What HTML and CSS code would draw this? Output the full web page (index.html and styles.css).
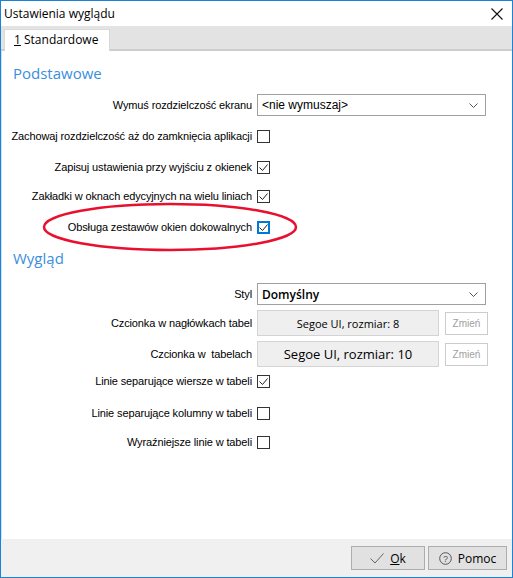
FILE: index.html
```html
<html>
    <head>
        <meta charset="utf-8">
        <link rel="stylesheet" href="styles.css">
    </head>
    <body>
        <div class="window">
            <div class="titlebar">
                <span class="title">Ustawienia wyglądu</span>
                <svg class="close" width="12" height="12" viewBox="0 0 12 12"><path d="M0.5 0.5 L11.5 11.5 M11.5 0.5 L0.5 11.5" stroke="#111" stroke-width="1.1" fill="none"/></svg>
            </div>
            <div class="tabstrip">
                <div class="tab"><u>1</u> Standardowe</div>
            </div>
            <div class="content">
                <h2 class="section">Podstawowe</h2>
                <div class="row first">
                    <span class="lbl">Wymuś rozdzielczość ekranu</span>
                    <div class="select"><span>&lt;nie wymuszaj&gt;</span><svg width="9" height="5" viewBox="0 0 9 5"><path d="M0.5 0.5 L4.5 4.5 L8.5 0.5" stroke="#555" fill="none"/></svg></div>
                </div>
                <div class="row">
                    <span class="lbl">Zachowaj rozdzielczość aż do zamknięcia aplikacji</span>
                    <span class="check"></span>
                </div>
                <div class="row">
                    <span class="lbl">Zapisuj ustawienia przy wyjściu z okienek</span>
                    <span class="check on"><svg width="11" height="11" viewBox="0 0 11 11"><path d="M1.5 5.5 L4.5 8.5 L9.5 2.5" stroke="#222" fill="none"/></svg></span>
                </div>
                <div class="row near">
                    <span class="lbl">Zakładki w oknach edycyjnych na wielu liniach</span>
                    <span class="check on"><svg width="11" height="11" viewBox="0 0 11 11"><path d="M1.5 5.5 L4.5 8.5 L9.5 2.5" stroke="#222" fill="none"/></svg></span>
                </div>
                <div class="row">
                    <span class="lbl">Obsługa zestawów okien dokowalnych</span>
                    <span class="check on focus"><svg width="9" height="9" viewBox="0 0 9 9"><path d="M0.5 4.5 L3.5 7.5 L8.5 1.5" stroke="#222" fill="none"/></svg></span>
                </div>

                <h2 class="section second">Wygląd</h2>
                <div class="row styl">
                    <span class="lbl">Styl</span>
                    <div class="select"><span class="big">Domyślny</span><svg width="9" height="5" viewBox="0 0 9 5"><path d="M0.5 0.5 L4.5 4.5 L8.5 0.5" stroke="#555" fill="none"/></svg></div>
                </div>
                <div class="row tall">
                    <span class="lbl">Czcionka w nagłówkach tabel</span>
                    <div class="fontbtn">Segoe UI, rozmiar: 8</div>
                    <div class="change">Zmień</div>
                </div>
                <div class="row tall">
                    <span class="lbl">Czcionka w &nbsp;tabelach</span>
                    <div class="fontbtn large">Segoe UI, rozmiar: 10</div>
                    <div class="change">Zmień</div>
                </div>
                <div class="row close-up">
                    <span class="lbl">Linie separujące wiersze w tabeli</span>
                    <span class="check on"><svg width="11" height="11" viewBox="0 0 11 11"><path d="M1.5 5.5 L4.5 8.5 L9.5 2.5" stroke="#222" fill="none"/></svg></span>
                </div>
                <div class="row wide">
                    <span class="lbl">Linie separujące kolumny w tabeli</span>
                    <span class="check"></span>
                </div>
                <div class="row near">
                    <span class="lbl">Wyraźniejsze linie w tabeli</span>
                    <span class="check"></span>
                </div>

                <!-- red marker drawn over the form -->
                <svg class="ring" width="260" height="52" viewBox="0 0 260 52"><ellipse cx="130" cy="26" rx="126" ry="23" stroke="#e8102e" stroke-width="2.5" fill="none"/></svg>
            </div>
            <div class="footer">
                <div class="btn"><svg width="14" height="11" viewBox="0 0 14 11"><path d="M0.5 5.5 L5 10 L13.5 0.5" stroke="#666" fill="none"/></svg><span><u>O</u>k</span></div>
                <div class="btn help"><svg width="13" height="13" viewBox="0 0 13 13"><circle cx="6.5" cy="6.5" r="5.8" stroke="#555" fill="none"/><text x="6.5" y="9.6" font-size="9" text-anchor="middle" fill="#555" font-family="Liberation Sans, sans-serif">?</text></svg><span>Pomoc</span></div>
            </div>
        </div>
    </body>
</html>
```

FILE: styles.css
```css
body {
    margin: 0;
    font-family: 'Liberation Sans', Arial, sans-serif;
    font-size: 11px;
    color: #000;
    background-color: #fff;
}
.window {
    position: relative;
    width: 513px;
    height: 578px;
    box-sizing: border-box;
    border: 1px solid #1883d7;
    display: flex;
    flex-direction: column;
}
.titlebar {
    height: 25px;
    display: flex;
    align-items: center;
    justify-content: space-between;
    padding: 0 9px 0 3px;
    background-color: #fff;
}
.title {
    font-family: 'Open Sans', sans-serif;
    font-size: 12px;
    color: #000;
}
.tabstrip {
    height: 25px;
    box-sizing: border-box;
    padding: 3px 0 0 3px;
    background-color: #e3e3e3;
    border-bottom: 2px solid #cdcdcd;
    display: flex;
    align-items: flex-end;
}
.tab {
    width: 106px;
    height: 22px;
    margin-bottom: -2px;
    box-sizing: border-box;
    padding: 1px 0 0 9px;
    background-color: #fff;
    border: 1px solid #d9d9d9;
    border-bottom: none;
    font-family: 'Open Sans', sans-serif;
    font-size: 12px;
}
.content {
    position: relative;
    flex: 1;
    padding-top: 11px;
    background-color: #fff;
    border-left: 1px solid #cfe3f5;
}
.section {
    margin: 0 0 0 11px;
    height: 22px;
    line-height: 22px;
    font-family: 'Open Sans', sans-serif;
    font-size: 15px;
    font-weight: normal;
    color: #3b8ede;
}
.section.second {
    margin-top: 9px;
}
.row {
    display: flex;
    align-items: center;
    height: 22px;
    margin-top: 9px;
}
.row.first {
    margin-top: 10px;
}
.row.near {
    margin-top: 7px;
}
.row.styl {
    margin-top: 14px;
}
.row.tall {
    height: 26px;
    margin-top: 5px;
}
.row.close-up {
    margin-top: 3px;
}
.row.wide {
    margin-top: 10px;
}
.lbl {
    width: 250px;
    margin-right: 5px;
    text-align: right;
    white-space: nowrap;
    letter-spacing: -0.12px;
}
.check {
    width: 13px;
    height: 13px;
    box-sizing: border-box;
    border: 1px solid #333;
    background-color: #fff;
    display: flex;
    align-items: center;
    justify-content: center;
}
.check.focus {
    border: 2px solid #0078d7;
}
.select {
    width: 229px;
    height: 22px;
    box-sizing: border-box;
    border: 1px solid #a0a0a0;
    display: flex;
    align-items: center;
    justify-content: space-between;
    padding: 0 7px 0 4px;
    font-size: 12px;
}
.select .big {
    font-family: 'Open Sans', sans-serif;
    font-size: 12px;
    font-weight: 600;
}
.fontbtn {
    width: 182px;
    height: 26px;
    box-sizing: border-box;
    border: 1px solid #d4d4d4;
    background-color: #efefef;
    display: flex;
    align-items: center;
    justify-content: center;
    font-family: 'Open Sans', sans-serif;
    font-size: 11px;
}
.fontbtn.large {
    font-size: 13px;
}
.change {
    width: 43px;
    height: 23px;
    margin-left: 6px;
    box-sizing: border-box;
    border: 1px solid #cccccc;
    display: flex;
    align-items: center;
    justify-content: center;
    font-size: 10px;
    color: #a0a0a0;
}
.ring {
    position: absolute;
    left: 38px;
    top: 150px;
}
.footer {
    height: 38px;
    box-sizing: border-box;
    padding: 7px 5px 0 0;
    background-color: #f0f0f0;
    display: flex;
    justify-content: flex-end;
    gap: 3px;
}
.btn {
    width: 74px;
    height: 24px;
    box-sizing: border-box;
    border: 1px solid #adadad;
    background-color: #e1e1e1;
    display: flex;
    align-items: center;
    justify-content: center;
    gap: 6px;
    font-family: 'Open Sans', sans-serif;
    font-size: 12px;
}
.btn.help {
    width: 79px;
}
```
